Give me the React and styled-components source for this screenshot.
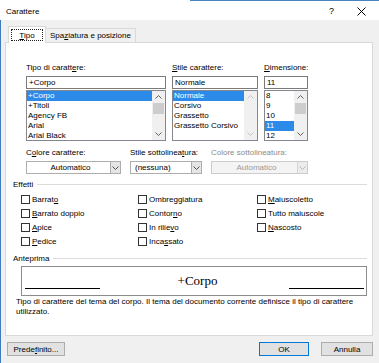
import styled, { createGlobalStyle } from 'styled-components'

const GlobalStyle = createGlobalStyle`
  html, body { margin: 0; padding: 0; background: #f0f0f0; }
  body { font-family: "Liberation Sans", Arial, sans-serif; font-size: 8px; color: #000; }
  * { box-sizing: border-box; }
`

const Window = styled.div`
  width: 379px;
  height: 363px;
  overflow: hidden;
  display: flex;
  flex-direction: column;
  background: #f0f0f0;
`

const TitleBar = styled.div`
  height: 20px;
  flex: none;
  display: flex;
  align-items: center;
  padding: 2px 0 0 6px;
  background: linear-gradient(#4a85c1, #4a85c1) no-repeat 190px 0 / 100% 1px, #fff;
`

const Title = styled.span`
  flex: 1;
`

const HelpMark = styled.span`
  font-size: 9px;
  margin-right: 23px;
`

const CloseIcon = styled.svg`
  margin-right: 13px;
`

const Body = styled.div`
  flex: 1;
  display: flex;
  flex-direction: column;
  border-left: 1px solid #3d7dbf;
  padding: 6px 6px 0 4px;
`

const TabStrip = styled.div`
  display: flex;
  align-items: flex-end;
  height: 17px;
  padding-left: 3px;
  margin-bottom: -1px;
  position: relative;
  z-index: 1;
`

const ActiveTab = styled.div`
  width: 38px;
  height: 17px;
  padding: 2px 2px 3px;
  background: #fff;
  border: 1px solid #d9d9d9;
  border-bottom: none;
`

const FocusRect = styled.div`
  height: 12px;
  border: 1px dotted #222;
  display: flex;
  align-items: center;
  justify-content: center;
`

const Tab = styled.div`
  height: 15px;
  padding: 0 4px;
  display: flex;
  align-items: center;
  background: #f0f0f0;
  border: 1px solid #d9d9d9;
  border-left: none;
  white-space: nowrap;
`

const Panel = styled.div`
  height: 294px;
  flex: none;
  background: #fff;
  border: 1px solid #d9d9d9;
  display: flex;
  flex-direction: column;
`

const FieldsRow = styled.div`
  display: flex;
  gap: ${p => p.$gap}px;
  margin-top: ${p => p.$top}px;
  padding-left: 20px;
`

const Field = styled.div`
  width: ${p => p.$w}px;
  display: flex;
  flex-direction: column;
`

const Label = styled.div`
  height: 10px;
  line-height: 10px;
  margin-bottom: 3px;
  white-space: nowrap;
  color: ${p => (p.$disabled ? '#8a8a8a' : '#000')};
`

const TextBox = styled.div`
  height: 13px;
  line-height: 11px;
  padding-left: 2px;
  border: 1px solid #7a7a7a;
  background: #fff;
`

const ListBox = styled.div`
  height: 51px;
  margin-top: 1px;
  display: flex;
  border: 1px solid #828790;
  background: #fff;
`

const Items = styled.div`
  flex: 1;
  overflow: hidden;
`

const Item = styled.div`
  height: 10px;
  line-height: 10px;
  padding-left: 1px;
  white-space: nowrap;
  background: ${p => (p.$selected ? '#2c8ae8' : 'transparent')};
  color: ${p => (p.$selected ? '#fff' : '#000')};
`

const ScrollBar = styled.div`
  width: 13px;
  flex: none;
  display: flex;
  flex-direction: column;
  background: #f0f0f0;
`

const ScrollBtn = styled.div`
  height: 12px;
  display: flex;
  align-items: center;
  justify-content: center;
`

const Thumb = styled.div`
  height: 11px;
  margin: 0 1px;
  background: #cdcdcd;
`

const Spacer = styled.div`
  flex: 1;
`

const Combo = styled.div`
  height: 13px;
  display: flex;
  border: 1px solid ${p => (p.$disabled ? '#cccccc' : '#adadad')};
  background: ${p => (p.$disabled ? '#f4f4f4' : '#fff')};
  color: ${p => (p.$disabled ? '#9a9a9a' : '#000')};
`

const ComboText = styled.div`
  flex: 1;
  line-height: 11px;
  padding-left: 4px;
  text-align: ${p => (p.$center ? 'center' : 'left')};
  white-space: nowrap;
`

const DropBtn = styled.div`
  width: 10px;
  display: flex;
  align-items: center;
  justify-content: center;
  border-left: 1px solid ${p => (p.$disabled ? '#d4d4d4' : '#adadad')};
  background: ${p => (p.$disabled ? '#ececec' : '#e5e5e5')};
`

const GroupHeader = styled.div`
  height: 10px;
  margin-top: ${p => p.$top}px;
  padding: 0 5px 0 7px;
  display: flex;
  align-items: center;

  &::after {
    content: '';
    flex: 1;
    height: 1px;
    margin-left: 4px;
    background: #dcdcdc;
  }
`

const CheckGrid = styled.div`
  margin-top: 3px;
  padding-left: 15px;
  display: grid;
  grid-template-columns: 117px 119px 1fr;
  grid-auto-rows: 14px;
`

const CheckItem = styled.label`
  display: flex;
  align-items: center;
  white-space: nowrap;
`

const Box = styled.span`
  width: 9px;
  height: 9px;
  margin-right: 2px;
  border: 1px solid #333;
  background: #fff;
`

const Preview = styled.div`
  height: 30px;
  margin: 3px 5px 0 15px;
  padding: 0 2px 0 3px;
  border: 1px solid #8c8c8c;
  display: flex;
  align-items: center;
  justify-content: space-between;
`

const PreviewLine = styled.div`
  width: 75px;
  height: 1px;
  margin-top: 15px;
  background: #000;
`

const PreviewText = styled.span`
  font-family: "Liberation Serif", "Times New Roman", serif;
  font-size: 13px;
  margin-left: 6px;
`

const Description = styled.div`
  margin-top: 1px;
  padding-left: 10px;
  line-height: 10px;
  white-space: nowrap;
`

const Footer = styled.div`
  margin-top: 6px;
  height: 14px;
  display: flex;
`

const Button = styled.div`
  width: ${p => p.$w}px;
  margin-left: ${p => p.$ml || 0}px;
  display: flex;
  align-items: center;
  justify-content: center;
  background: #e1e1e1;
  border: 1px solid ${p => (p.$default ? '#0078d7' : '#adadad')};
`

function Chevron({ up, color = '#606060' }) {
  return (
    <svg width="7" height="4" viewBox="0 0 7 4">
      <polyline
        points={up ? '0.5,3.5 3.5,0.5 6.5,3.5' : '0.5,0.5 3.5,3.5 6.5,0.5'}
        fill="none"
        stroke={color}
        strokeWidth="1"
      />
    </svg>
  )
}

function Scroll({ thumb, disabled }) {
  const c = disabled ? '#c4c4c4' : '#606060'
  return (
    <ScrollBar>
      <ScrollBtn><Chevron up color={c} /></ScrollBtn>
      {thumb && <Thumb />}
      <Spacer />
      <ScrollBtn><Chevron color={c} /></ScrollBtn>
    </ScrollBar>
  )
}

function ComboBox({ text, center, disabled }) {
  return (
    <Combo $disabled={disabled}>
      <ComboText $center={center}>{text}</ComboText>
      <DropBtn $disabled={disabled}>
        <Chevron color={disabled ? '#b8b8b8' : '#505050'} />
      </DropBtn>
    </Combo>
  )
}

const fonts = ['+Corpo', '+Titoli', 'Agency FB', 'Arial', 'Arial Black']
const styles = ['Normale', 'Corsivo', 'Grassetto', 'Grassetto Corsivo']
const sizes = ['8', '9', '10', '11', '12']

const effects = [
  <>Barrat<u>o</u></>, <>Ombreggiatura</>, <><u>M</u>aiuscoletto</>,
  <><u>B</u>arrato doppio</>, <>Contor<u>n</u>o</>, <>Tutto maiuscole</>,
  <><u>A</u>pice</>, <>In rilie<u>v</u>o</>, <><u>N</u>ascosto</>,
  <><u>P</u>edice</>, <>Inca<u>s</u>sato</>,
]

export default function App() {
  return (
    <Window>
      <GlobalStyle />
      <TitleBar>
        <Title>Carattere</Title>
        <HelpMark>?</HelpMark>
        <CloseIcon width="9" height="9" viewBox="0 0 9 9">
          <path d="M0.5 0.5 L8.5 8.5 M8.5 0.5 L0.5 8.5" stroke="#000" strokeWidth="1" />
        </CloseIcon>
      </TitleBar>
      <Body>
        <TabStrip>
          <ActiveTab>
            <FocusRect><span><u>T</u>ipo</span></FocusRect>
          </ActiveTab>
          <Tab>Spa<u>z</u>iatura e posizione</Tab>
        </TabStrip>
        <Panel>
          <FieldsRow $top={20} $gap={6}>
            <Field $w={140}>
              <Label>Tipo di caratt<u>e</u>re:</Label>
              <TextBox>+Corpo</TextBox>
              <ListBox>
                <Items>
                  {fonts.map((f, i) => <Item key={f} $selected={i === 0}>{f}</Item>)}
                </Items>
                <Scroll thumb />
              </ListBox>
            </Field>
            <Field $w={86}>
              <Label><u>S</u>tile carattere:</Label>
              <TextBox>Normale</TextBox>
              <ListBox>
                <Items>
                  {styles.map((s, i) => <Item key={s} $selected={i === 0}>{s}</Item>)}
                </Items>
                <Scroll disabled />
              </ListBox>
            </Field>
            <Field $w={44}>
              <Label><u>D</u>imensione:</Label>
              <TextBox>11</TextBox>
              <ListBox>
                <Items>
                  {sizes.map((s, i) => <Item key={s} $selected={i === 3}>{s}</Item>)}
                </Items>
                <Scroll thumb />
              </ListBox>
            </Field>
          </FieldsRow>

          <FieldsRow $top={7} $gap={9}>
            <Field $w={95}>
              <Label>C<u>o</u>lore carattere:</Label>
              <ComboBox text="Automatico" center />
            </Field>
            <Field $w={72}>
              <Label>Stile sottolinea<u>t</u>ura:</Label>
              <ComboBox text="(nessuna)" />
            </Field>
            <Field $w={97}>
              <Label $disabled>Colore sottolineatura:</Label>
              <ComboBox text="Automatico" center disabled />
            </Field>
          </FieldsRow>

          <GroupHeader $top={5}>Effetti</GroupHeader>
          <CheckGrid>
            {effects.map((e, i) => (
              <CheckItem key={i}><Box />{e}</CheckItem>
            ))}
          </CheckGrid>

          <GroupHeader $top={5}>Anteprima</GroupHeader>
          <Preview>
            <PreviewLine />
            <PreviewText>+Corpo</PreviewText>
            <PreviewLine />
          </Preview>
          <Description>
            Tipo di carattere del tema del corpo. Il tema del documento corrente definisce il tipo di carattere
            <br />
            utilizzato.
          </Description>
        </Panel>
        <Footer>
          <Button $w={58} $ml={2}>Prede<u>f</u>inito...</Button>
          <Spacer />
          <Button $w={50} $default>OK</Button>
          <Button $w={52} $ml={12}>Annulla</Button>
        </Footer>
      </Body>
    </Window>
  )
}
